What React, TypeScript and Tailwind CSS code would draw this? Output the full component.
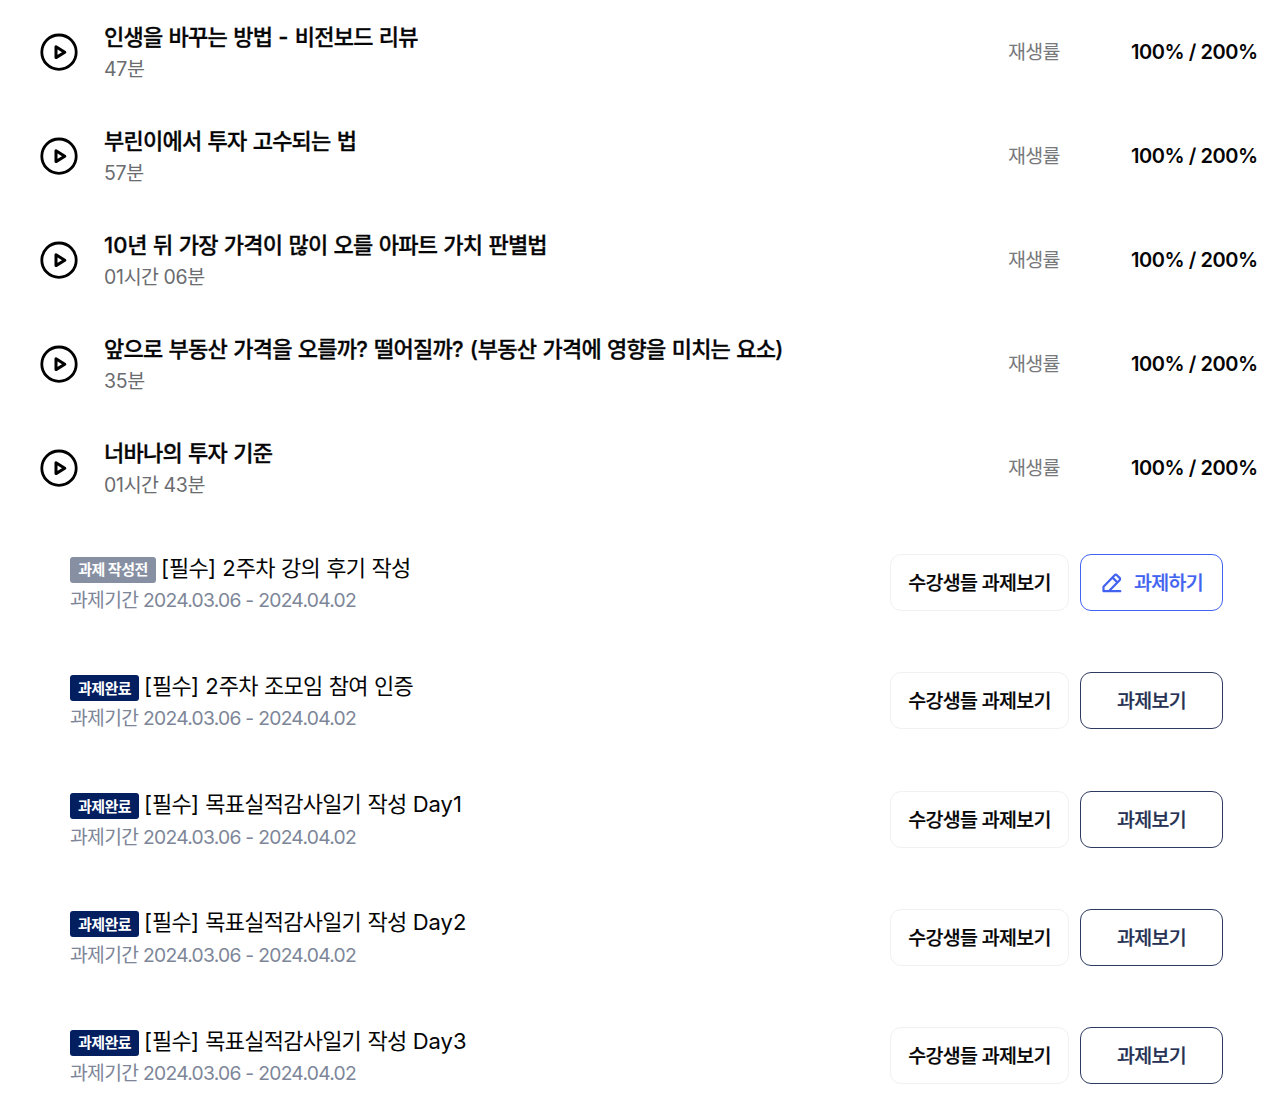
const lectures = [
  { title: '인생을 바꾸는 방법 - 비전보드 리뷰', duration: '47분' },
  { title: '부린이에서 투자 고수되는 법', duration: '57분' },
  { title: '10년 뒤 가장 가격이 많이 오를 아파트 가치 판별법', duration: '01시간 06분' },
  { title: '앞으로 부동산 가격을 오를까? 떨어질까? (부동산 가격에 영향을 미치는 요소)', duration: '35분' },
  { title: '너바나의 투자 기준', duration: '01시간 43분' },
];

const tasks = [
  { title: '[필수] 2주차 강의 후기 작성', done: false },
  { title: '[필수] 2주차 조모임 참여 인증', done: true },
  { title: '[필수] 목표실적감사일기 작성 Day1', done: true },
  { title: '[필수] 목표실적감사일기 작성 Day2', done: true },
  { title: '[필수] 목표실적감사일기 작성 Day3', done: true },
];

// Hangul is set tighter than the latin letters and digits around it
function Text({ children }: { children: string }) {
  return (
    <>
      {children.split(/([가-힣 ]+)/).map((part, i) => (
        <span key={i} className={i % 2 ? 'tracking-[-0.035em]' : ''}>
          {part}
        </span>
      ))}
    </>
  );
}

function PlayIcon() {
  return (
    <svg className="w-[38px] h-[38px] shrink-0" fill="none" stroke="#000" viewBox="0 0 38 38">
      <circle cx="19" cy="19.2" r="17.2" strokeWidth={2.8} />
      <path strokeLinejoin="round" strokeWidth={3} d="M16 13.8v10.8L24.8 19.2z" />
    </svg>
  );
}

function PencilIcon() {
  return (
    <svg className="w-5 h-5 shrink-0" fill="none" stroke="currentColor" viewBox="0 0 20 20">
      <path strokeLinecap="round" strokeLinejoin="round" strokeWidth={2.2} d="M18.3 18.2H1.5v-4.5L12.6 2.2a1.6 1.6 0 012.3 0l2.7 2.7a1.6 1.6 0 010 2.3L6.8 18.2M10.6 4.6l4.6 4.6" />
    </svg>
  );
}

export default function App() {
  return (
    <div className="w-[1281px] h-[1107px] overflow-hidden bg-white font-['Inter','Noto_Sans_CJK_KR',sans-serif] text-[#050506] whitespace-nowrap">
      <div className="pb-[3.6px]">
        {lectures.map((lecture) => (
          <div key={lecture.title} className="flex items-center h-[104px] pl-10 pr-6">
            <PlayIcon />
            <div className="ml-[26px] pt-px flex-1">
              <h3 className="text-[22px] leading-8 font-medium [word-spacing:1.1px] [-webkit-text-stroke:0.3px]">
                <Text>{lecture.title}</Text>
              </h3>
              <p className="text-[19.5px] leading-8 tracking-[-0.3px] [word-spacing:0.5px] text-[#6b6c70]">
                <Text>{lecture.duration}</Text>
              </p>
            </div>
            <span className="w-[123px] pt-px text-[19.5px] text-[#77787c]">
              <Text>재생률</Text>
            </span>
            <span className="w-[126px] text-[20px] tracking-[-0.45px] font-semibold">100% / 200%</span>
          </div>
        ))}
      </div>
      {tasks.map((task) => (
        <div key={task.title} className="flex items-center h-[118.25px] pl-[70px] pr-[58px]">
          <div className="flex-1 pt-[3px]">
            <div className="flex items-center h-8">
              <span
                className={`flex items-center justify-center h-[26px] mt-[3px] rounded-[3px] text-[15px] font-bold text-white ${
                  task.done ? 'w-[69px] bg-[#041f60]' : 'w-[86px] bg-[#8790a3]'
                }`}
              >
                <span className="pt-0.5">
                  <Text>{task.done ? '과제완료' : '과제 작성전'}</Text>
                </span>
              </span>
              <h3 className="ml-[5px] text-[22px] [word-spacing:0.9px]">
                <Text>{task.title}</Text>
              </h3>
            </div>
            <p className="text-[19.3px] leading-8 tracking-[-0.75px] text-[#7d8698]">
              <Text>과제기간 2024.03.06 - 2024.04.02</Text>
            </p>
          </div>
          <button className="w-[179px] h-[57px] pt-0.5 rounded-[11px] border border-[#f1f1f2] text-[19.5px] font-medium [-webkit-text-stroke:0.2px]">
            <Text>수강생들 과제보기</Text>
          </button>
          <button
            className={`flex items-center justify-center gap-3 w-[143px] h-[57px] ml-[11px] rounded-[11px] border text-[19.5px] font-medium [-webkit-text-stroke:0.2px] ${
              task.done ? 'border-[#2e3a60] text-[#263153]' : 'pl-0.5 border-[#4262f0] text-[#4262f0]'
            }`}
          >
            {!task.done && <PencilIcon />}
            <span className="pt-0.5">
              <Text>{task.done ? '과제보기' : '과제하기'}</Text>
            </span>
          </button>
        </div>
      ))}
    </div>
  );
}
